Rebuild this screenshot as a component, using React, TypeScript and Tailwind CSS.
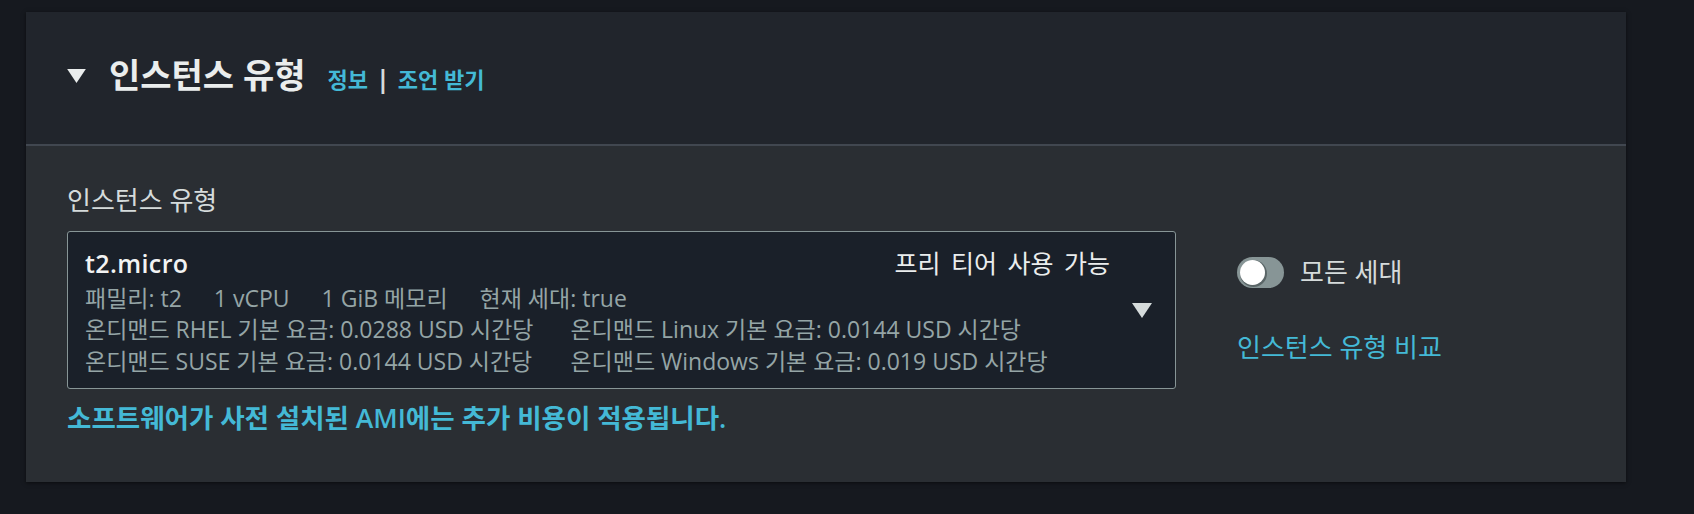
import React from "react"

const Caret = ({ className }: { className?: string }) => (
  <svg className={className} viewBox="0 0 20 15" width="20" height="15">
    <polygon points="0,0 20,0 10,15" fill="currentColor" />
  </svg>
)

function Toggle() {
  return (
    <div className="flex h-[31px] w-[47px] items-center rounded-full bg-[#879596] pl-[3px]">
      <div className="h-[25px] w-[25px] rounded-full bg-white shadow-[1px_1px_0_1px_rgba(60,70,72,0.6)]" />
    </div>
  )
}

export default function App() {
  return (
    <div className="min-h-[514px] bg-[#16191f] pl-[26px] pt-[12px] font-['Open_Sans','Noto_Sans_CJK_KR',sans-serif]">
      <div className="w-[1600px] bg-[#2a2e33] shadow-[0_1px_4px_rgba(0,0,0,0.55)]">
        {/* header */}
        <div className="flex h-[132px] items-center bg-[#21252c] pb-[4px] pl-[41px]">
          <Caret className="h-[14px] w-[19px] text-[#eaeded]" />
          <div className="ml-[23px] flex items-baseline">
            <h2 className="text-[34px] font-bold leading-[40px] text-[#eaeded]">인스턴스 유형</h2>
            <div className="ml-[22px] flex items-baseline gap-x-[8px] text-[22px] font-bold">
              <span className="text-[#44b9d6]">정보</span>
              <span className="text-[25px] text-[#d5dbdb]">|</span>
              <span className="text-[#44b9d6]">조언 받기</span>
            </div>
          </div>
        </div>
        <div className="h-[2px] bg-[#414750]" />

        {/* body */}
        <div className="px-[41px] pb-[48px] pt-[38px]">
          <div className="mb-[15px] text-[26px] leading-[32px] text-[#d5dbdb]">인스턴스 유형</div>
          <div className="flex items-start">
            <div className="flex w-[1109px] rounded-[3px] border border-[#879596] bg-[#1a2029]">
              <div className="flex-1 pb-[11px] pl-[17px] pt-[15px]">
                <div className="flex items-baseline justify-between">
                  <span className="text-[25px] font-semibold leading-[32px] tracking-[0.4px] text-[#f2f3f3]">t2.micro</span>
                  <span className="text-[25px] leading-[32px] text-[#eaeded] [word-spacing:4px]">프리 티어 사용 가능</span>
                </div>
                <div className="mt-[3px] flex gap-x-[32px] text-[23px] leading-[32px] text-[#95a5a6]">
                  <span>패밀리: t2</span>
                  <span>1 vCPU</span>
                  <span>1 GiB 메모리</span>
                  <span>현재 세대: true</span>
                </div>
                <div className="grid grid-cols-[max-content_max-content] gap-x-[37px] text-[23px] leading-[31.5px] text-[#95a5a6]">
                  <span>온디맨드 RHEL 기본 요금: 0.0288 USD 시간당</span>
                  <span>온디맨드 Linux 기본 요금: 0.0144 USD 시간당</span>
                  <span>온디맨드 SUSE 기본 요금: 0.0144 USD 시간당</span>
                  <span>온디맨드 Windows 기본 요금: 0.019 USD 시간당</span>
                </div>
              </div>
              <div className="flex items-center pl-[22px] pr-[23px]">
                <Caret className="h-[15px] w-[20px] text-[#d5dbdb]" />
              </div>
            </div>

            <div className="ml-[61px] flex flex-col pt-[25px]">
              <div className="flex h-[32px] items-center gap-x-[16px]">
                <Toggle />
                <span className="text-[26px] leading-[32px] text-[#d5dbdb]">모든 세대</span>
              </div>
              <a className="mt-[43px] text-[26px] leading-[32px] text-[#44b9d6]">인스턴스 유형 비교</a>
            </div>
          </div>
          <div className="mt-[13px] text-[26.5px] font-semibold leading-[32px] text-[#44b9d6]">
            소프트웨어가 사전 설치된 AMI에는 추가 비용이 적용됩니다.
          </div>
        </div>
      </div>
    </div>
  )
}
